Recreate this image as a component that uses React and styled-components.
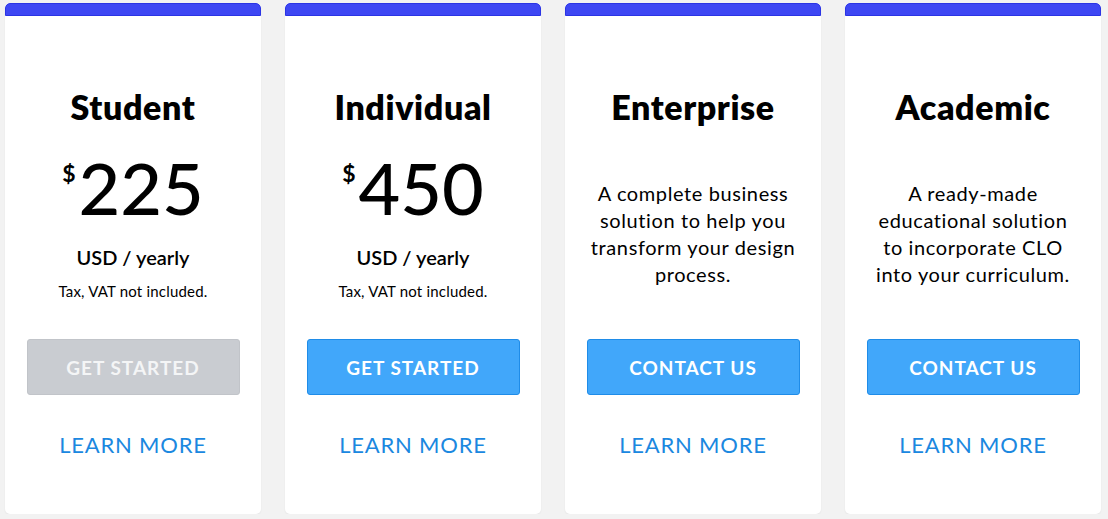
import React from 'react';
import styled, { createGlobalStyle } from 'styled-components';

const GlobalStyle = createGlobalStyle`
  html, body {
    margin: 0;
    padding: 0;
    background: #f2f2f2;
    font-family: Lato, "Open Sans", sans-serif;
    color: #000;
  }
`;

const Page = styled.div`
  display: flex;
  gap: 24px;
  padding: 3px 5px 0;
`;

const Card = styled.div`
  width: 256px;
  height: 511px;
  background: #fff;
  border-radius: 5px;
  box-shadow: 0 1px 2px rgba(0, 0, 0, 0.06);
  display: flex;
  flex-direction: column;
  align-items: center;
  overflow: hidden;
`;

const TopBar = styled.div`
  align-self: stretch;
  height: 13px;
  background: #3e47f3;
  border: 1px solid #2b34e4;
  border-radius: 5px 5px 0 0;
  box-sizing: border-box;
`;

const Title = styled.h2`
  margin: 71px 0 0;
  font-size: 34px;
  line-height: 40px;
  font-weight: 800;
  letter-spacing: 0.6px;
`;

const Details = styled.div`
  height: 212px;
  display: flex;
  flex-direction: column;
  align-items: center;
  padding-top: ${(p) => (p.$text ? 53 : 24)}px;
  box-sizing: border-box;
`;

const Price = styled.div`
  display: flex;
  align-items: flex-start;
  font-size: 72px;
  line-height: 72px;
  font-weight: 500;
`;

const Dollar = styled.span`
  font-size: 23px;
  line-height: 23px;
  font-weight: 700;
  margin: 11px 3px 0 0;
`;

const Period = styled.div`
  margin-top: 22px;
  font-size: 20px;
  line-height: 24px;
  font-weight: 600;
`;

const Note = styled.div`
  margin-top: 13px;
  font-size: 15px;
  line-height: 19px;
  letter-spacing: 0.2px;
`;

const Description = styled.p`
  margin: 0;
  width: 210px;
  text-align: center;
  font-size: 20px;
  line-height: 27px;
  letter-spacing: 0.6px;
`;

const Button = styled.button`
  width: 213px;
  height: 56px;
  border-radius: 3px;
  border: 1px solid ${(p) => (p.$disabled ? '#c1c4c9' : '#1f8ce8')};
  background: ${(p) => (p.$disabled ? '#c9ccd1' : '#41a7fa')};
  color: ${(p) => (p.$disabled ? '#f4f5f6' : '#fff')};
  font-family: inherit;
  font-size: 19px;
  font-weight: 700;
  letter-spacing: 1px;
  cursor: pointer;
`;

const LearnMore = styled.a`
  margin-top: 37px;
  font-size: 22px;
  line-height: 26px;
  letter-spacing: 0.8px;
  color: #1b88e0;
  text-decoration: none;
  cursor: pointer;
`;

const plans = [
  { name: 'Student', price: '225', cta: 'GET STARTED', disabled: true },
  { name: 'Individual', price: '450', cta: 'GET STARTED' },
  {
    name: 'Enterprise',
    text: 'A complete business solution to help you transform your design process.',
    cta: 'CONTACT US',
  },
  {
    name: 'Academic',
    text: 'A ready-made educational solution to incorporate CLO into your curriculum.',
    cta: 'CONTACT US',
  },
];

const App = () => {
  return (
    <>
      <GlobalStyle />
      <Page>
        {plans.map((plan) => (
          <Card key={plan.name}>
            <TopBar />
            <Title>{plan.name}</Title>
            <Details $text={!!plan.text}>
              {plan.text ? (
                <Description>{plan.text}</Description>
              ) : (
                <>
                  <Price>
                    <Dollar>$</Dollar>
                    {plan.price}
                  </Price>
                  <Period>USD / yearly</Period>
                  <Note>Tax, VAT not included.</Note>
                </>
              )}
            </Details>
            <Button $disabled={plan.disabled}>{plan.cta}</Button>
            <LearnMore>LEARN MORE</LearnMore>
          </Card>
        ))}
      </Page>
    </>
  );
};

export default App;
